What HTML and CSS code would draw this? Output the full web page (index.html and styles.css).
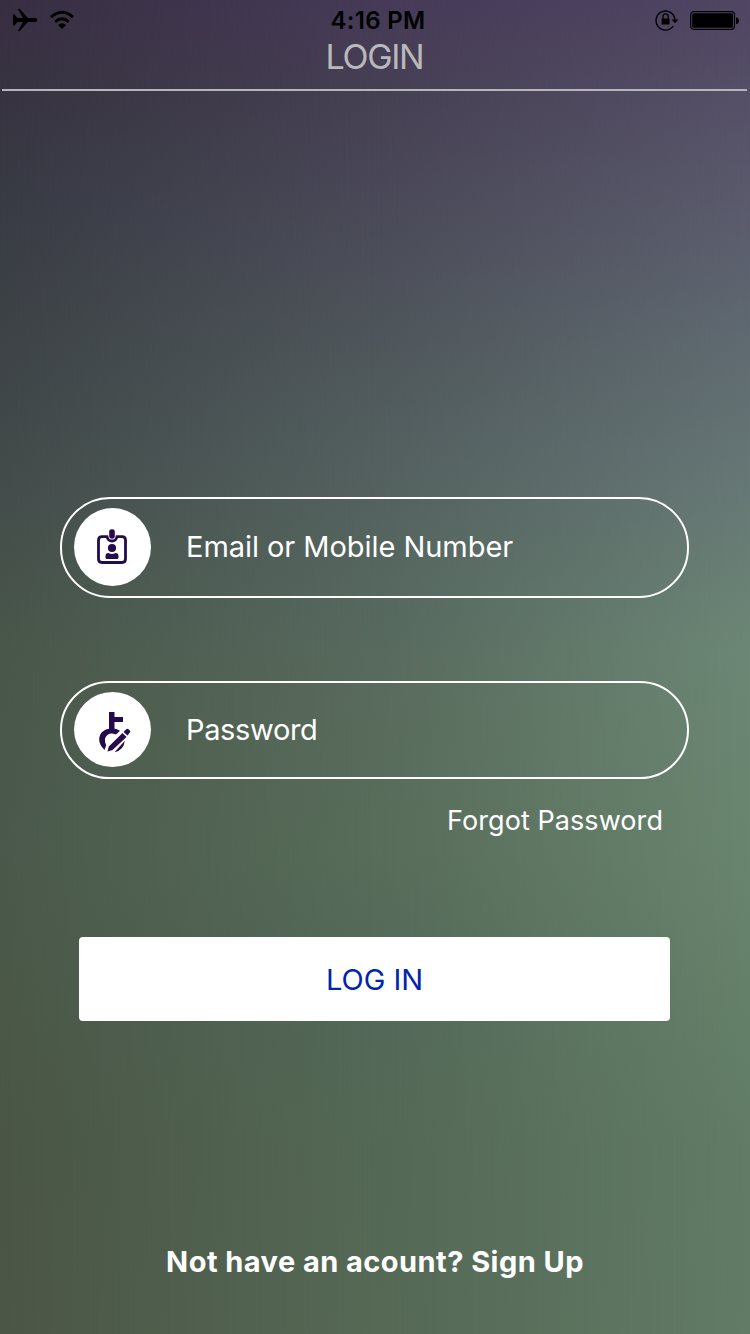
FILE: index.html
```html
<!DOCTYPE html>
<html lang="en">
<head>
<meta charset="utf-8">
<title>Login</title>
<link rel="stylesheet" href="styles.css">
</head>
<body>
<main class="screen">
  <div class="status">
    <div class="status-left">
      <svg class="plane" width="26" height="24" viewBox="0 0 26 24"><path d="M1 6.500h1.500L5.500 10H11L5.800 1h2L16 10h7q2.300.2 2.300 2T23 14h-7l-8.200 9h-2L11 14H5.500l-3 3.500H1z"/></svg>
      <svg class="wifi" width="26" height="20" viewBox="0 0 26 20"><path d="M2 7.200Q13 -2.500 24 7.200M6.300 11.800Q13 5.800 19.700 11.800" fill="none" stroke="#000" stroke-width="2.900"/><path d="M9 15q4-3.600 8 0L13 19z"/></svg>
    </div>
    <div class="time">4:16 PM</div>
    <div class="status-right">
      <svg class="lock" width="25" height="22" viewBox="0 0 25 22"><path d="M18.200 17.200A9.500 9.500 0 1 1 20 11" fill="none" stroke="#000" stroke-width="1.400"/><path d="M16.500 10.500h7L20 14.300z"/><path d="M6.600 9.500h8v6h-8z"/><path d="M8 10V7.500a2.600 2.600 0 0 1 5.200 0V10" fill="none" stroke="#000" stroke-width="1.300"/></svg>
      <svg class="battery" width="50" height="20" viewBox="0 0 50 20"><rect x=".7" y=".7" width="43.800" height="17.600" rx="3" fill="none" stroke="#000" stroke-width="1.200"/><rect x="2.200" y="2.300" width="40.800" height="14.400" rx="1.500"/><path d="M46 6.200q3 .5 3 3.500t-3 3.500z"/></svg>
    </div>
  </div>
  <header class="title"><span>LOGIN</span></header>
  <form class="form">
    <div class="field email">
      <span class="badge"><svg width="30" height="36" viewBox="0 0 30 36"><path d="M10 7.700H5Q1.500 7.700 1.500 11.200v18.500q0 3.800 3.500 3.800h20q3.500 0 3.500-3.800V11.200q0-3.500-3.500-3.500h-5Q19 12 15 12t-5-4.300z" fill="none" stroke="#250b4b" stroke-width="2.800"/><rect x="12.200" y=".2" width="5.600" height="9.500" rx="2.400" fill="#250b4b"/><circle cx="15" cy="19" r="4.100" fill="#250b4b"/><path d="M8.500 28.500v-1.300q0-3.200 3-3.200 3.500 1.800 7 0 3 0 3 3.200v1.300q0 1.500-1.500 1.500H10q-1.500 0-1.500-1.500z" fill="#250b4b"/></svg></span>
      <span class="label">Email or Mobile Number</span>
    </div>
    <div class="field password">
      <span class="badge"><svg width="34" height="44" viewBox="0 0 34 44"><g fill="#250b4b"><path d="M11 2h5.500v5H25v5h-8.500v8H11z"/><path d="M6.500 40Q1 34.500 1.200 29 2 19 14 18.500q4.500 0 8 2.200l-4 3.800q-8-3-11 4-.6 4 1.200 6.700z"/><path d="M24.500 23l4 4L14.500 40 9.500 41.500l1.300-5z"/><path d="M25.500 22l3-3q1-.8 2 .2l1.300 1.300q1 1 .1 2L29.500 25.500z"/><path d="M26.800 30.800q-1 9.500-10.300 11.500z"/></g></svg></span>
      <span class="label password-label">Password</span>
    </div>
    <a class="forgot">Forgot Password</a>
    <div class="login"><span>LOG IN</span></div>
  </form>
  <footer class="signup"><span>Not have an acount? Sign Up</span></footer>
</main>
</body>
</html>
```
FILE: styles.css
```css
* { box-sizing: border-box; }
body { margin: 0; font-family: Inter, "Liberation Sans", sans-serif; }
.screen {
  position: relative; isolation: isolate; width: 750px; height: 1334px; overflow: hidden;
  display: flex; flex-direction: column; color: #fff;
  background: linear-gradient(#382e42, #373440 100px, #383b44 200px, #3e4447 350px, #444d4b 500px, #49574a 650px, #4a594b 850px, #4b5848 1000px, #4a5546 1150px, #4c5646);
}
/* Central and right-hand colour columns fade into the left one. */
.screen::before, .screen::after { content: ""; position: absolute; inset: 0; z-index: -1; }
.screen::before {
  background: linear-gradient(#463a58, #464053 100px, #4a4958 200px, #4f575b 350px, #535f5f 450px, #56685f 600px, #596b5c 700px, #586d5a 850px, #536859 1000px, #546955 1150px, #556955);
  mask-image: linear-gradient(90deg, transparent, #000 50%);
}
.screen::after {
  background: linear-gradient(#504562, #565068 100px, #5a5a6c 200px, #606b71 350px, #677976 500px, #6c8775 650px, #69846f 850px, #658069 1000px, #617b67 1150px, #627b66);
  mask-image: linear-gradient(90deg, transparent 50%, #000);
}
svg { display: block; }
.status { height: 40px; flex: none; display: grid; grid-template-columns: 1fr auto 1fr; padding: 0 10px 0 12px; color: #000; }
.status-left { display: flex; gap: 11px; padding-top: 8px; }
.wifi { margin-top: 2px; }
.time { font-size: 24px; font-weight: 600; line-height: 42px; letter-spacing: .3px; white-space: nowrap; margin-left: 4px; }
.status-right { display: flex; justify-content: flex-end; gap: 10px; padding-top: 9px; }
.battery { margin-top: 2px; }
.title { height: 51px; flex: none; margin: 0 3px 0 2px; border-bottom: 2px solid #b7b5bc; color: #b9b8ba; text-align: center; font-size: 34px; font-weight: 400; line-height: 33px; letter-spacing: -1.3px; }
.form { flex: 1; display: flex; flex-direction: column; padding: 406px 61px 0 60px; }
.field { flex: none; display: flex; align-items: center; border: 2px solid #fff; border-radius: 50px; padding-left: 12px; gap: 35px; }
.email { height: 101px; }
.password { height: 98px; margin-top: 83px; }
.badge { width: 77px; height: 78px; border-radius: 50%; background: #fff; display: flex; align-items: center; justify-content: center; margin-bottom: 2px; }
.email .badge { padding-right: 1px; }
.password .badge { height: 75px; padding: 6px 0 0 4px; }
.label { font-size: 29px; line-height: 40px; letter-spacing: -.05px; white-space: nowrap; margin-bottom: 2px; }
.password-label { letter-spacing: -.35px; margin-bottom: 0; }
.forgot { align-self: flex-end; margin: 22px 26px 0 0; font-size: 27px; line-height: 40px; letter-spacing: .07px; }
.login { margin: 96px 19px 0; height: 84px; border-radius: 4px; background: #fff; color: #0024ae; text-align: center; font-size: 29px; line-height: 85px; }
.signup { height: 96px; flex: none; text-align: center; font-size: 29px; font-weight: 700; line-height: 48px; letter-spacing: .45px; }
```
